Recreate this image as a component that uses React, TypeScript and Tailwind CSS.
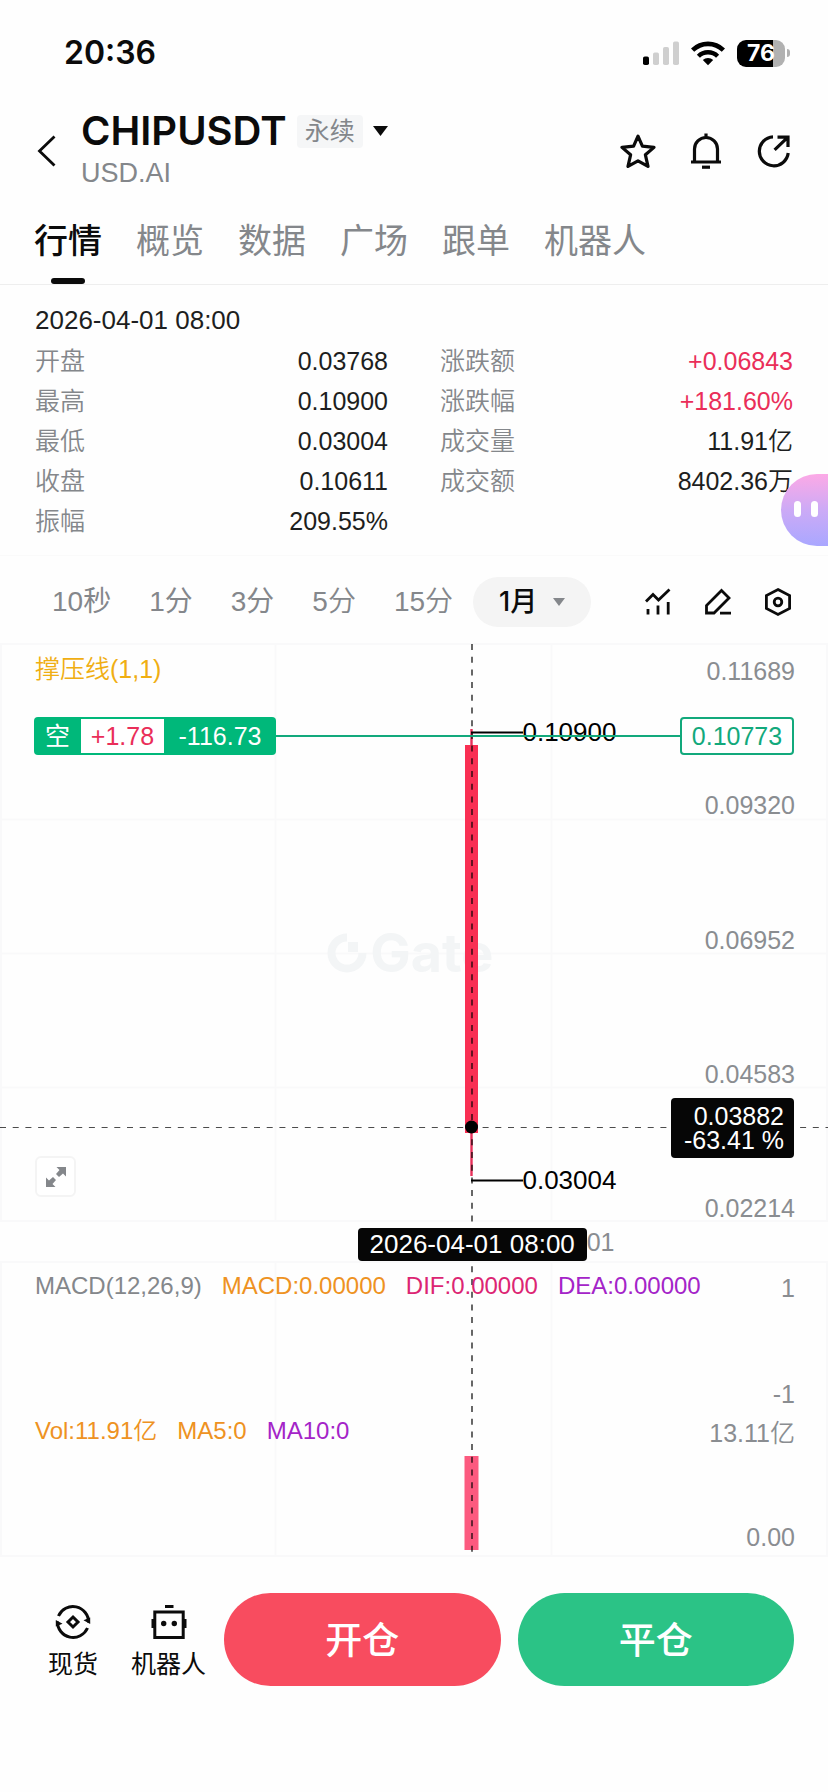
import React from "react";

const tabs = ["行情", "概览", "数据", "广场", "跟单", "机器人"];

const leftStats = [
  { label: "开盘", value: "0.03768" },
  { label: "最高", value: "0.10900" },
  { label: "最低", value: "0.03004" },
  { label: "收盘", value: "0.10611" },
  { label: "振幅", value: "209.55%" },
];

const rightStats = [
  { label: "涨跌额", value: "+0.06843", up: true },
  { label: "涨跌幅", value: "+181.60%", up: true },
  { label: "成交量", value: "11.91亿" },
  { label: "成交额", value: "8402.36万" },
];

const periods = [
  { label: "10秒", strong: true },
  { label: "1分", strong: true },
  { label: "3分", strong: true },
  { label: "5分", strong: false },
  { label: "15分", strong: false },
];

const priceTicks = ["0.11689", "0.09320", "0.06952", "0.04583", "0.02214"];

function StatusBar() {
  return (
    <div className="flex h-[106px] items-center justify-between pr-[38px] pl-16">
      <span className="font-['Inter',sans-serif] text-[32px] leading-10 font-semibold">20:36</span>
      <div className="flex items-center gap-3">
        <svg className="h-6 w-9" viewBox="0 0 36 24" aria-hidden="true">
          <rect x="0" y="15.5" width="6" height="8.5" rx="1.8" fill="#000" />
          <rect x="10" y="11.5" width="6" height="12.5" rx="1.8" fill="#cfcfcf" />
          <rect x="20" y="6" width="6" height="18" rx="1.8" fill="#cfcfcf" />
          <rect x="30" y="0.5" width="6" height="23.5" rx="1.8" fill="#cfcfcf" />
        </svg>
        <svg className="h-[26px] w-[34px]" viewBox="0 0 34 26" fill="none" stroke="#000" aria-hidden="true">
          <path d="M1.6 10.2 A22 22 0 0 1 32.4 10.2" strokeWidth="4.6" />
          <path d="M7.4 16.2 A13.6 13.6 0 0 1 26.6 16.2" strokeWidth="4.4" />
          <path d="M17 25.2 L11.8 20.1 A7.4 7.4 0 0 1 22.2 20.1 Z" fill="#000" stroke="none" />
        </svg>
        <div className="flex items-center gap-0.5">
          <div className="flex h-[27px] w-12 items-center justify-center rounded-[9px] bg-linear-to-r from-black from-76% to-[#b1b1b1] to-76% font-['Inter',sans-serif] text-[23px] leading-none font-bold text-white">
            76
          </div>
          <div className="h-2 w-[3px] rounded-r-full bg-[#b1b1b1]" />
        </div>
      </div>
    </div>
  );
}

function Header() {
  return (
    <header className="flex h-[90px] items-center justify-between pr-[36px] pl-9">
      <div className="flex items-center gap-[23px]">
        <button type="button" aria-label="返回" className="w-[22px]">
          <svg className="h-8 w-[22px]" viewBox="0 0 22 32" fill="none" stroke="#0b0b0b" strokeWidth="2.8">
            <path d="M18.5 1.5 L3.5 16 L18.5 30.5" />
          </svg>
        </button>
        <div>
          <button type="button" className="flex items-center gap-2.5">
            <h1 className="font-['Inter',sans-serif] text-[40px] leading-[44px] font-semibold text-[#0b0b0b]">CHIPUSDT</h1>
            <span className="rounded bg-[#f5f6f7] px-2 text-[25px] leading-[33px] text-[#84878b]">永续</span>
            <svg className="h-[10px] w-[15px]" viewBox="0 0 15 10" aria-hidden="true">
              <path d="M0 0 H15 L7.5 10 Z" fill="#0b0b0b" />
            </svg>
          </button>
          <p className="text-[27px] leading-10 text-[#84878b]">USD.AI</p>
        </div>
      </div>
      <div className="flex items-center gap-8">
        <button type="button" aria-label="收藏">
          <svg className="size-9" viewBox="0 0 36 36" fill="none" stroke="#0b0b0b" strokeWidth="3.2" strokeLinejoin="round">
            <path d="M18 3.2 L22.4 13.2 L34 14.4 L25.4 21.8 L28 33.4 L18 27.8 L8 33.4 L10.6 21.8 L2 14.4 L13.6 13.2 Z" />
          </svg>
        </button>
        <button type="button" aria-label="提醒">
          <svg className="size-9" viewBox="0 0 36 36" fill="none" stroke="#0b0b0b" strokeWidth="3.2">
            <path d="M18 0.5 V4.5 M3 29 H33 M6.5 29 V16 A11.5 11.5 0 0 1 29.5 16 V29" />
            <path d="M14 34.2 H22" />
          </svg>
        </button>
        <button type="button" aria-label="分享">
          <svg className="size-9" viewBox="0 0 36 36" fill="none" stroke="#0b0b0b" strokeWidth="3.2">
            <path d="M17 3.8 A14.5 14.5 0 1 0 32.2 20" />
            <path d="M18.6 16.8 L31.4 4.6 M21.5 4.2 H32 V14" />
          </svg>
        </button>
      </div>
    </header>
  );
}

function Tabs() {
  return (
    <nav className="flex h-[89px] gap-[34px] border-b border-[#eeeeee] pl-[34px]">
      {tabs.map((tab, i) => (
        <button
          key={tab}
          type="button"
          className={
            i === 0
              ? "relative pt-0.5 text-[34px] leading-none font-medium text-[#0b0b0b]"
              : "relative pt-0.5 text-[34px] leading-none text-[#84878b]"
          }
        >
          {tab}
          {i === 0 && <span className="absolute bottom-0 left-1/2 h-1.5 w-[34px] -translate-x-1/2 rounded-full bg-[#0b0b0b]" />}
        </button>
      ))}
    </nav>
  );
}

function StatList({ items }: { items: { label: string; value: string; up?: boolean }[] }) {
  return (
    <dl className="flex-1">
      {items.map((s) => (
        <div key={s.label} className="flex justify-between">
          <dt className="font-[350] text-[#84878b]">{s.label}</dt>
          <dd className={s.up ? "text-[#ea2e59]" : "font-[350] text-[#1d1e20]"}>{s.value}</dd>
        </div>
      ))}
    </dl>
  );
}

function Stats() {
  return (
    <section className="relative border-b border-[#fafafa] px-[35px] pt-3.5 pb-3.5 text-[25px] leading-10">
      <p className="text-[26px] leading-[42px] text-[#1d1e20]">2026-04-01 08:00</p>
      <div className="flex gap-[52px]">
        <StatList items={leftStats} />
        <StatList items={rightStats} />
      </div>
      <button
        type="button"
        aria-label="智能助手"
        className="absolute right-0 bottom-[9px] flex h-[72px] w-[47px] items-center justify-start gap-2.5 rounded-l-[36px] bg-linear-to-b from-[#fca9e6] via-[#ccaaf6] to-[#a9a7ff] pb-0.5 pl-[13px]"
      >
        <span className="h-4 w-[7px] rounded-full bg-white" />
        <span className="h-4 w-[7px] rounded-full bg-white" />
      </button>
    </section>
  );
}

function PeriodBar() {
  return (
    <div className="flex h-[87px] items-center justify-between pt-1 pr-[36px] pl-[52px]">
      <div className="flex items-center gap-[38px] text-[28px] leading-[50px] text-[#84878b]">
        {periods.map((p) => (
          <button key={p.label} type="button" className={p.strong ? "font-normal" : "font-[350]"}>
            {p.label}
          </button>
        ))}
        <button
          type="button"
          className="-ml-[18px] flex h-[50px] w-[118px] items-center justify-center gap-4 rounded-full bg-[#f4f4f4] font-medium text-[#0b0b0b]"
        >
          <span className="font-['Inter','Noto_Sans_CJK_SC',sans-serif] text-[27px]">1月</span>
          <svg className="h-2 w-3" viewBox="0 0 12 8" aria-hidden="true">
            <path d="M0 0 H12 L6 8 Z" fill="#84878b" />
          </svg>
        </button>
      </div>
      <div className="flex items-center gap-8">
        <button type="button" aria-label="指标">
          <svg className="size-7" viewBox="0 0 28 28" fill="none" stroke="#0b0b0b" strokeWidth="2.8">
            <path d="M2 13.5 L9 6.5 L14.5 12 L25.5 1.5" />
            <path d="M4 21 V26.5 M14 17.5 V26.5 M24.2 14 V26.5" />
          </svg>
        </button>
        <button type="button" aria-label="画线">
          <svg className="size-7" viewBox="0 0 28 28" fill="none" stroke="#0b0b0b" strokeWidth="2.8">
            <path d="M2.5 25 V17.5 L17.5 2.5 L25 10 L10 25 Z M16 25.2 H27" />
          </svg>
        </button>
        <button type="button" aria-label="设置">
          <svg className="size-7" viewBox="0 0 28 28" fill="none" stroke="#0b0b0b" strokeWidth="2.8">
            <path d="M14 1.6 L25.6 7.6 V20.4 L14 26.4 L2.4 20.4 V7.6 Z" />
            <circle cx="14" cy="14" r="3.8" />
          </svg>
        </button>
      </div>
    </div>
  );
}

function ChartBackground() {
  return (
    <svg className="absolute inset-0 h-full w-full" viewBox="0 0 828 914" preserveAspectRatio="none" aria-hidden="true">
      <g stroke="#f9f9fa" strokeWidth="2">
        <path d="M1 1 V578 M275.5 1 V578 M551.5 1 V578 M827 1 V578" />
        <path d="M1 619 V914 M275.5 619 V914 M551.5 619 V914 M827 619 V914" />
        <path d="M0 1 H828 M0 176.5 H828 M0 310.5 H828 M0 444.5 H828 M0 578 H828 M0 619 H828 M0 913 H828" />
      </g>
    </svg>
  );
}

function Watermark() {
  return (
    <div className="absolute top-[284px] left-[39.4%] flex items-center gap-0.5 text-[#f3f5f6]">
      <svg className="size-[42px]" viewBox="0 0 42 42" fill="none" aria-hidden="true">
        <path d="M21 5.5 A15.5 15.5 0 1 0 36.5 21" stroke="currentColor" strokeWidth="8" />
        <rect x="22" y="10" width="10" height="10" fill="currentColor" />
      </svg>
      <span className="font-['Inter',sans-serif] text-[54px] leading-[52px] font-bold">Gate</span>
    </div>
  );
}

function ChartSeries() {
  return (
    <svg className="absolute inset-0 h-full w-full" viewBox="0 0 828 914" preserveAspectRatio="none" aria-hidden="true">
      <path d="M471.5 86 V533" stroke="#e8305a" strokeWidth="2.4" />
      <rect x="465" y="102" width="13" height="388" fill="#f92f53" />
      <rect x="464.5" y="813" width="14" height="94" fill="#fc5a7f" />
      <path d="M471 89.5 H523 M471 537.5 H523" stroke="#000" strokeWidth="2" />
      <path d="M472 1 V914" stroke="#000" strokeOpacity="0.75" strokeWidth="1.6" strokeDasharray="6 6.7" />
      <path d="M0 484.5 H828" stroke="#000" strokeOpacity="0.7" strokeWidth="1.2" strokeDasharray="6 6.7" />
      <circle cx="471.5" cy="484" r="6.5" fill="#000" />
    </svg>
  );
}

function Chart() {
  return (
    <section className="relative flex flex-col text-[25px] leading-7">
      <ChartBackground />
      <Watermark />
      <ChartSeries />

      <div className="relative flex h-[579px] justify-between pr-[33px] pl-[35px]">
        <span className="pt-3 font-[350] text-[#f0ae12]">撑压线(1,1)</span>
        <ul className="flex flex-col justify-between pt-3.5 text-right text-[#8a8d91]">
          {priceTicks.map((t) => (
            <li key={t}>{t}</li>
          ))}
        </ul>
        <span className="absolute top-[75px] left-[63.1%] text-[26px] text-black">0.10900</span>
        <span className="absolute top-[523px] left-[63.1%] text-[26px] text-black">0.03004</span>
        <div className="absolute top-[74px] right-[34px] left-[34px] flex h-[38px] items-center">
          <div className="flex h-full items-center rounded bg-[#00b87a] py-0.5 leading-[34px] text-white">
            <span className="w-[47px] text-center">空</span>
            <span className="w-[83px] bg-white text-center text-[#ea2e59]">+1.78</span>
            <span className="w-[112px] text-center">-116.73</span>
          </div>
          <div className="h-0.5 flex-1 bg-[#12a97c]" />
          <span className="h-full w-[114px] rounded border-2 border-[#12a97c] bg-white text-center leading-[34px] text-[#12a97c]">0.10773</span>
        </div>
        <div className="absolute right-[34px] bottom-[64px] w-[123px] rounded bg-[#060606] py-1.5 pr-2.5 text-right leading-6 whitespace-nowrap text-white">
          <p>0.03882</p>
          <p>-63.41 %</p>
        </div>
        <button
          type="button"
          aria-label="全屏"
          className="absolute bottom-[25px] left-[35px] flex size-[41px] items-center justify-center rounded-md border-2 border-[#f4f4f4] bg-white"
        >
          <svg className="size-5" viewBox="0 0 20 20" fill="#84878b" aria-hidden="true">
            <path d="M10.5 0 H20 V9.5 L17 6.5 L13 10 L10 7 L13.5 3 Z" />
            <path d="M9.5 20 H0 V10.5 L3 13.5 L7 10 L10 13 L6.5 17 Z" />
          </svg>
        </button>
      </div>

      <div className="relative h-[40px]">
        <div className="absolute top-1.5 left-[43.2%] flex items-start">
          <span className="w-[229px] rounded bg-[#060606] text-center text-[26px] leading-[33px] whitespace-nowrap text-white">2026-04-01 08:00</span>
          <span className="leading-7 text-[#8a8d91]">01</span>
        </div>
      </div>

      <div className="relative flex h-[146px] justify-between pr-[33px] pl-[35px]">
        <div className="flex gap-5 pt-2.5 text-[24px]">
          <span className="text-[#84878b]">MACD(12,26,9)</span>
          <span className="text-[#ee9222]">MACD:0.00000</span>
          <span className="text-[#dc2573]">DIF:0.00000</span>
          <span className="text-[#a424c8]">DEA:0.00000</span>
        </div>
        <div className="flex flex-col justify-between pt-3 text-right text-[#8a8d91]">
          <span>1</span>
          <span>-1</span>
        </div>
      </div>

      <div className="relative flex h-[149px] justify-between pr-[33px] pl-[35px]">
        <div className="flex gap-5 pt-[9px] text-[24px]">
          <span className="font-[350] text-[#ee9222]">Vol:11.91亿</span>
          <span className="text-[#ee9222]">MA5:0</span>
          <span className="text-[#a424c8]">MA10:0</span>
        </div>
        <div className="flex flex-col justify-between pt-[11px] pb-1.5 text-right text-[#8a8d91]">
          <span className="font-[350]">13.11亿</span>
          <span>0.00</span>
        </div>
      </div>
    </section>
  );
}

function BottomBar() {
  return (
    <footer className="flex items-center gap-[18px] pt-9 pr-[34px] pl-12 text-[25px] leading-8">
      <div className="flex gap-[33px] pt-1">
        <button type="button" className="flex flex-col items-center gap-2">
          <svg className="size-9" viewBox="0 0 36 36" fill="none" stroke="#0b0b0b" strokeWidth="3" aria-hidden="true">
            <path d="M3.5 12 A15.7 15.7 0 0 1 33.6 18.5" />
            <path d="M32.5 24 A15.7 15.7 0 0 1 2.4 17.5" />
            <path d="M35.2 13.5 V20 L28.5 16.2 Z" fill="#0b0b0b" stroke="none" />
            <path d="M0.8 22.5 V16 L7.5 19.8 Z" fill="#0b0b0b" stroke="none" />
            <path d="M18 13 L23 18 L18 23 L13 18 Z" />
          </svg>
          <span>现货</span>
        </button>
        <button type="button" className="flex flex-col items-center gap-2">
          <svg className="size-9" viewBox="0 0 36 36" aria-hidden="true">
            <rect x="3.8" y="8" width="28.4" height="25.5" fill="none" stroke="#0b0b0b" strokeWidth="3" />
            <rect x="14" y="1" width="8.5" height="3" fill="#0b0b0b" />
            <rect x="0.5" y="15" width="3" height="9" fill="#0b0b0b" />
            <rect x="32.5" y="15" width="3" height="9" fill="#0b0b0b" />
            <circle cx="12.7" cy="19.5" r="2.7" fill="#0b0b0b" />
            <circle cx="23.3" cy="19.5" r="2.7" fill="#0b0b0b" />
          </svg>
          <span>机器人</span>
        </button>
      </div>
      <div className="flex flex-1 gap-[17px] text-[37px] font-medium text-white">
        <button type="button" className="h-[93px] flex-1 rounded-full bg-[#f84c5f] pt-1">开仓</button>
        <button type="button" className="h-[93px] flex-1 rounded-full bg-[#2bc386] pt-1">平仓</button>
      </div>
    </footer>
  );
}

export default function App() {
  return (
    <main className="min-h-screen bg-[#fefefe] font-['Liberation_Sans','Noto_Sans_CJK_SC',sans-serif] text-[#0b0b0b]">
      <StatusBar />
      <Header />
      <Tabs />
      <Stats />
      <PeriodBar />
      <Chart />
      <BottomBar />
    </main>
  );
}
